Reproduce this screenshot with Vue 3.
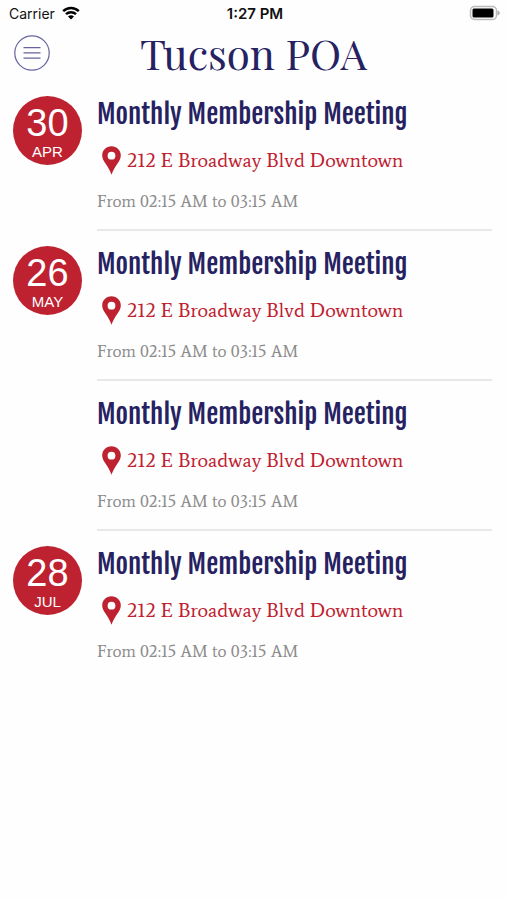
<script setup>
const address = '212 E Broadway Blvd Downtown'
const hours = 'From 02:15 AM to 03:15 AM'
const title = 'Monthly Membership Meeting'

const events = [
  { id: 1, day: '30', month: 'APR', title, address, hours },
  { id: 2, day: '26', month: 'MAY', title, address, hours },
  { id: 3, day: '', month: '', title, address, hours },
  { id: 4, day: '28', month: 'JUL', title, address, hours },
]
</script>

<template>
  <div class="screen">
    <div class="status">
      <div class="carrier">
        <span>Carrier</span>
        <svg class="wifi" viewBox="0 0 18 14" aria-hidden="true">
          <path d="M1.2 5.2a11.2 11.2 0 0 1 15.6 0" />
          <path d="M4 8.2a7.2 7.2 0 0 1 10 0" />
          <path class="dot" d="M9 13.6 6 10.6a4.3 4.3 0 0 1 6 0Z" />
        </svg>
      </div>
      <span class="clock">1:27 PM</span>
      <svg class="battery" viewBox="0 0 32 16" aria-hidden="true">
        <rect class="shell" x="1.5" y="1.5" width="26" height="13" rx="4" />
        <rect x="3.5" y="3.5" width="21" height="9" rx="1.5" />
        <path class="cap" d="M28.5 5.5c1.6.6 2.2 1.5 2.2 2.5s-.6 1.9-2.2 2.5Z" />
      </svg>
    </div>

    <header class="bar">
      <button class="menu" type="button" aria-label="Menu">
        <svg viewBox="0 0 36 36" aria-hidden="true">
          <circle cx="18" cy="18" r="17.2" />
          <path d="M9.5 12.7h17M9.5 17.9h17M9.5 23.1h17" />
        </svg>
      </button>
      <h1>Tucson POA</h1>
    </header>

    <main>
      <article v-for="event in events" :key="event.id" class="event">
        <div class="side">
          <div v-if="event.day" class="date">
            <span class="day">{{ event.day }}</span>
            <span class="month">{{ event.month }}</span>
          </div>
        </div>
        <div class="details">
          <h2>{{ event.title }}</h2>
          <p class="place">
            <svg viewBox="0 0 19 29" aria-hidden="true">
              <path
                fill-rule="evenodd"
                d="M9.5.3C4.3.3.2 4.4.2 9.5c0 3 1.3 5.2 3.3 8 2.6 3.7 4.5 7 6 11.3 1.5-4.3 3.4-7.6 6-11.3 2-2.8 3.3-5 3.3-8C18.8 4.4 14.7.3 9.5.3Zm0 5.5a3.9 3.9 0 1 1 0 7.8 3.9 3.9 0 0 1 0-7.8Z"
              />
            </svg>
            <span>{{ event.address }}</span>
          </p>
          <p class="hours">{{ event.hours }}</p>
        </div>
      </article>
    </main>
  </div>
</template>

<style>
body {
  background: #fefefe;
}
</style>

<style scoped>
.screen {
  font-family: "Liberation Sans", Arial, sans-serif;
  color: #262262;
}

.status {
  display: grid;
  grid-template-columns: 1fr auto 1fr;
  align-items: center;
  height: 26px;
  padding: 0 6px 0 9px;
  font-family: Inter, "Liberation Sans", sans-serif;
  font-size: 14px;
  color: #111;
}

.carrier {
  display: flex;
  align-items: center;
  gap: 7px;
}

.wifi {
  width: 18px;
  height: 14px;
  fill: none;
  stroke: #000;
  stroke-width: 2.5;
}

.wifi .dot {
  fill: #000;
  stroke: none;
}

.clock {
  font-size: 15px;
  font-weight: 600;
}

.battery {
  justify-self: end;
  width: 32px;
  height: 16px;
}

.battery .shell {
  fill: none;
  stroke: #bbb;
  stroke-width: 1.5;
}

.battery .cap {
  fill: #aaa;
}

.bar {
  display: grid;
  grid-template-columns: 36px 1fr 36px;
  align-items: center;
  height: 54px;
  padding: 0 14px;
}

.menu {
  width: 36px;
  height: 36px;
  padding: 0;
  border: 0;
  background: none;
  cursor: pointer;
}

.menu svg {
  display: block;
  fill: none;
  stroke: #6664a0;
  stroke-width: 1.2;
}

h1 {
  margin: 0;
  font-family: "Playfair Display", "Liberation Serif", serif;
  font-size: 42px;
  font-weight: 400;
  line-height: 54px;
  text-align: center;
  white-space: nowrap;
}

main {
  padding: 1px 15px 0 13px;
}

.event {
  display: grid;
  grid-template-columns: 69px 1fr;
  column-gap: 15px;
}

.side {
  padding-top: 15px;
}

.date {
  display: flex;
  flex-direction: column;
  align-items: center;
  width: 69px;
  height: 69px;
  padding-top: 8px;
  box-sizing: border-box;
  border-radius: 50%;
  background: #be2231;
  color: #fff;
}

.day {
  font-size: 38px;
  line-height: 38px;
}

.month {
  font-size: 15px;
  line-height: 20px;
}

.details {
  padding: 13px 0;
  border-bottom: 2px solid #e8e8e8;
}

.event:last-child .details {
  border-bottom: 0;
}

h2 {
  margin: 0;
  font-family: "Fjalla One", "Liberation Sans Narrow", sans-serif;
  font-size: 27px;
  font-weight: 400;
  line-height: 40px;
  white-space: nowrap;
}

p {
  margin: 0;
}

.place {
  display: flex;
  align-items: center;
  gap: 6px;
  height: 52px;
  padding-left: 5px;
  font-family: Average, "Liberation Serif", serif;
  font-size: 20px;
  color: #be2231;
  white-space: nowrap;
}

.place svg {
  width: 19px;
  height: 29px;
  fill: #be2231;
}

.hours {
  font-family: Average, "Liberation Serif", serif;
  font-size: 17px;
  line-height: 30px;
  color: #8c8c8c;
}
</style>
